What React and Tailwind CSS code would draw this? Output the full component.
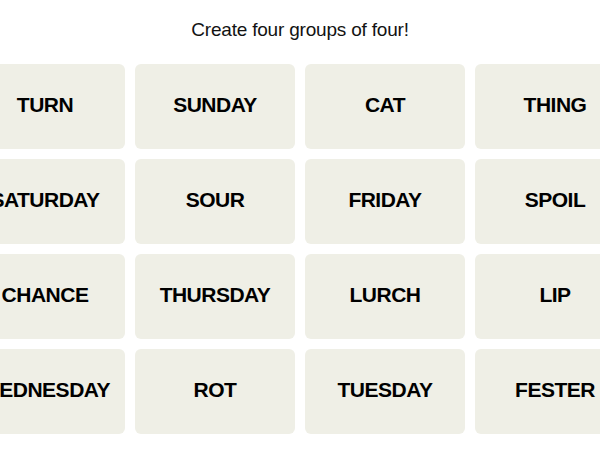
const words = [
  "TURN", "SUNDAY", "CAT", "THING",
  "SATURDAY", "SOUR", "FRIDAY", "SPOIL",
  "CHANCE", "THURSDAY", "LURCH", "LIP",
  "WEDNESDAY", "ROT", "TUESDAY", "FESTER",
];

export default function App() {
  return (
    <div className="w-[600px] h-[450px] overflow-hidden bg-white font-['Liberation_Sans',Arial,sans-serif]">
      <p className="pt-[17px] h-[64px] text-center text-[19px] leading-[25px] text-[#121212] tracking-[-0.2px]">
        Create four groups of four!
      </p>
      <div className="flex justify-center">
        <div className="grid grid-cols-[repeat(4,160px)] auto-rows-[85px] gap-[10px] shrink-0">
          {words.map((w) => (
            <div
              key={w}
              className="flex items-center justify-center pb-[3px] rounded-[6px] bg-[#efefe6] text-[21px] tracking-[-0.5px] font-bold text-black whitespace-nowrap"
            >
              {w}
            </div>
          ))}
        </div>
      </div>
    </div>
  );
}
